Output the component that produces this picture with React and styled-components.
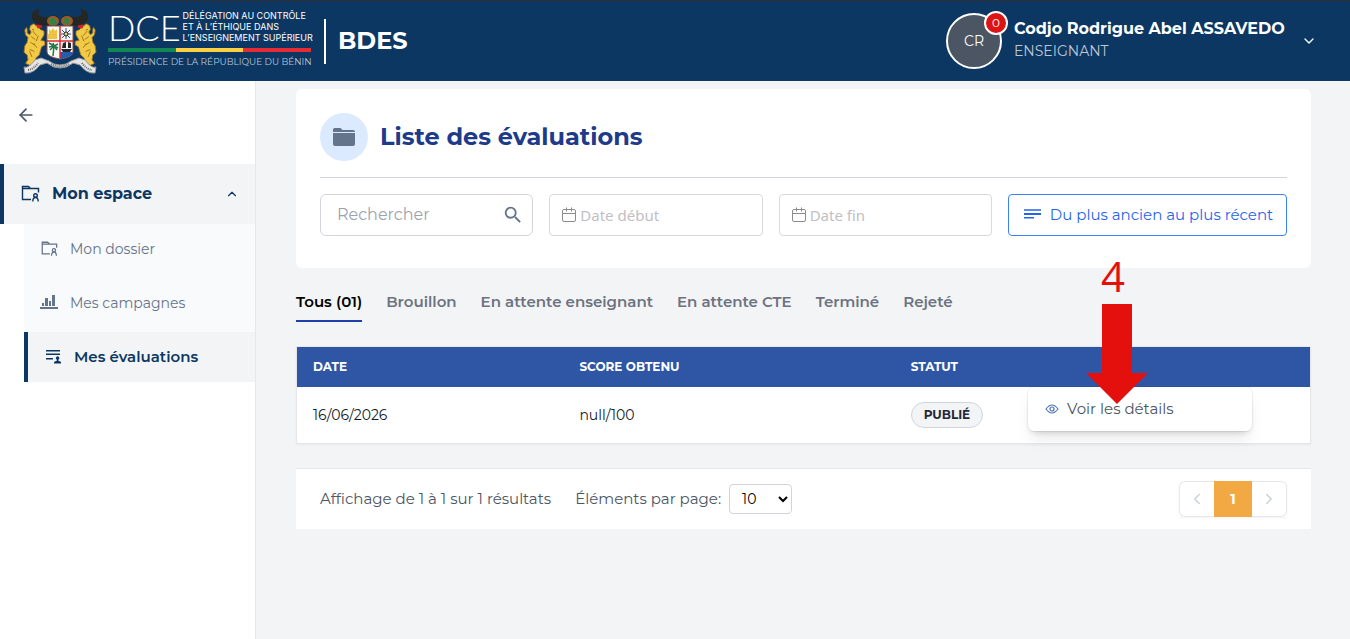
import { useState } from "react";
import styled, { createGlobalStyle } from "styled-components";
import { MdSearch } from "react-icons/md";
import { FiArrowLeft, FiChevronDown, FiChevronLeft, FiChevronRight, FiChevronUp } from "react-icons/fi";

const GlobalStyle = createGlobalStyle`
  * {
    box-sizing: border-box;
  }
  body {
    margin: 0;
    background: #f3f4f6;
    color: #111827;
    font-family: Montserrat, Inter, sans-serif;
    font-size: 14px;
    line-height: 20px;
  }
  button, input, select {
    font: inherit;
  }
  a {
    color: inherit;
    text-decoration: none;
  }
`;

const Page = styled.div`
  display: flex;
  flex-direction: column;
  min-height: 100vh;
`;

const Header = styled.header`
  display: flex;
  align-items: center;
  justify-content: space-between;
  height: 81px;
  padding: 0 33px 0 20px;
  border-top: 1px solid #2e3033;
  background: #0c3762;
  color: #fff;
`;

const Brand = styled.div`
  display: flex;
  align-items: center;
`;

const LogoText = styled.div`
  width: 203px;
  margin-left: 8px;
  padding-bottom: 4px;
  white-space: nowrap;
`;

const LogoTop = styled.div`
  display: flex;
  align-items: center;
  gap: 2px;
  height: 33px;
`;

const LogoName = styled.span`
  font-family: Lato, sans-serif;
  font-size: 36px;
  font-weight: 300;
  line-height: 36px;
`;

const LogoLines = styled.span`
  font-family: Inter, sans-serif;
  font-size: 9px;
  font-weight: 400;
  line-height: 11px;
`;

const FlagBar = styled.div`
  display: flex;
  height: 4px;
  margin: 5px 0 4px;
`;

const FlagBand = styled.span`
  flex: 1;
  background: ${({ color }) => color};
`;

const LogoBottom = styled.div`
  color: #b9c8d8;
  font-size: 9px;
  line-height: 12px;
`;

const AppName = styled.h1`
  margin: 0 0 0 13px;
  padding: 0 0 2px 12px;
  border-left: 2px solid #fff;
  font-size: 24px;
  line-height: 43px;
`;

const Account = styled.button`
  display: flex;
  align-items: center;
  gap: 12px;
  padding: 0;
  border: 0;
  background: none;
  color: #fff;
  text-align: left;
  cursor: pointer;
`;

const Avatar = styled.span`
  position: relative;
  display: flex;
  align-items: center;
  justify-content: center;
  width: 56px;
  height: 56px;
  border: 2px solid #fff;
  border-radius: 50%;
  background: #4b5563;
`;

const Badge = styled.span`
  position: absolute;
  top: -4px;
  right: -8px;
  width: 24px;
  height: 24px;
  border: 2px solid #fff;
  border-radius: 50%;
  background: #dc1414;
  font-size: 12px;
  text-align: center;
`;

const UserText = styled.span`
  min-width: 275px;
  padding-bottom: 4px;
`;

const UserName = styled.span`
  display: block;
  font-size: 16px;
  font-weight: 700;
  line-height: 24px;
`;

const UserRole = styled.span`
  display: block;
  color: #bcc6d2;
`;

const Body = styled.div`
  display: flex;
  flex: 1;
`;

const Sidebar = styled.aside`
  flex: 0 0 256px;
  border-right: 1px solid #e5e7eb;
  background: #fff;
`;

const BackButton = styled.button`
  display: flex;
  align-items: center;
  height: 36px;
  margin: 16px 0 31px 16px;
  padding: 0;
  border: 0;
  background: none;
  color: #4b5563;
`;

const MenuTitle = styled.button`
  display: flex;
  align-items: center;
  gap: 12px;
  width: 100%;
  height: 60px;
  padding: 0 16px;
  border: 0;
  border-left: 4px solid #0c3762;
  background: #f3f4f6;
  color: #0c3762;
  font-size: 16px;
  font-weight: 700;
  text-align: left;

  span {
    flex: 1;
  }
`;

const SubMenu = styled.nav`
  display: flex;
  flex-direction: column;
  gap: 4px;
  margin-left: 24px;
  background: #f9fafb;
`;

const MenuLink = styled.a`
  display: flex;
  align-items: center;
  gap: 12px;
  height: 50px;
  padding: 0 16px;
  border-left: ${({ $active }) => ($active ? "4px solid #0c3762" : "0")};
  background: ${({ $active }) => ($active ? "#f3f4f6" : "transparent")};
  color: ${({ $active }) => ($active ? "#0c3762" : "#64748b")};
  font-size: ${({ $active }) => ($active ? 15 : 14)}px;
  font-weight: ${({ $active }) => ($active ? 600 : 400)};
`;

const Main = styled.main`
  flex: 1;
  min-width: 0;
  padding: 8px 39px 40px 40px;
`;

const Card = styled.section`
  padding: 24px 24px 32px;
  border-radius: 6px;
  background: #fff;
`;

const CardHead = styled.div`
  display: flex;
  align-items: center;
  gap: 12px;
  padding-bottom: 16px;
  border-bottom: 1px solid #d1d5db;
`;

const RoundIcon = styled.span`
  display: flex;
  align-items: center;
  justify-content: center;
  width: 48px;
  height: 48px;
  border-radius: 50%;
  background: #dbeafe;
`;

const CardTitle = styled.h2`
  margin: 0;
  color: #1e3a8a;
  font-size: 24px;
  font-weight: 700;
  line-height: 32px;
`;

const Filters = styled.form`
  display: grid;
  grid-template-columns: repeat(3, minmax(0, 1fr)) 279px;
  gap: 16px;
  padding-top: 16px;
`;

const Field = styled.label`
  display: flex;
  align-items: center;
  gap: 4px;
  height: 42px;
  padding: ${({ $search }) => ($search ? "0 8px 0 16px" : "0 12px")};
  border: 1px solid ${({ $search }) => ($search ? "#d1d5db" : "#d9d9d9")};
  border-radius: ${({ $search }) => ($search ? 6 : 4)}px;
  color: #64748b;

  input {
    flex: 1;
    min-width: 0;
    padding: 0;
    border: 0;
    outline: 0;
    background: none;
    font-family: ${({ $search }) => ($search ? "inherit" : '"Noto Sans", sans-serif')};
    font-size: ${({ $search }) => ($search ? 16 : 15)}px;
  }
  input::placeholder {
    color: ${({ $search }) => ($search ? "#9ca3af" : "#bfbfc4")};
  }
`;

const SortButton = styled.button`
  display: flex;
  align-items: center;
  justify-content: center;
  gap: 8px;
  height: 42px;
  padding: 0;
  border: 1px solid #3b82f6;
  border-radius: 4px;
  background: #fff;
  color: #2563eb;
  font-size: 15px;
  white-space: nowrap;
`;

const Tabs = styled.div`
  display: flex;
  gap: 24px;
  padding: 16px 0 24px;
`;

const Tab = styled.button`
  height: 38px;
  padding: 0;
  border: 0;
  border-bottom: 2px solid ${({ $active }) => ($active ? "#1e40af" : "transparent")};
  background: none;
  color: ${({ $active }) => ($active ? "#000" : "#6b7280")};
  font-size: 15px;
  font-weight: 600;
  white-space: nowrap;
`;

const TableWrap = styled.div`
  position: relative;
  border: 1px solid #e5e7eb;
  background: #fff;
  box-shadow: 0 1px 2px rgba(0, 0, 0, 0.05);
`;

const Table = styled.table`
  width: 100%;
  border-collapse: collapse;
  table-layout: fixed;
  text-align: left;

  th {
    height: 40px;
    padding: 0 16px;
    background: #2f55a5;
    color: #fff;
    font-size: 12px;
    font-weight: 700;
  }
  td {
    height: 56px;
    padding: 0 16px;
  }
  th:nth-child(1) {
    width: 26.3%;
  }
  th:nth-child(2) {
    width: 32.7%;
  }
  th:nth-child(3) {
    width: 12%;
  }
`;

const Status = styled.span`
  display: inline-block;
  padding: 2px 12px;
  border: 1px solid #d1d5db;
  border-radius: 13px;
  background: #f3f4f6;
  color: #1f2937;
  font-size: 12px;
  font-weight: 700;
`;

const ActionCell = styled.td`
  position: relative;
`;

const ActionMenu = styled.div`
  position: absolute;
  top: 0;
  right: 58px;
  width: 224px;
  padding: 4px 0;
  border-radius: 6px;
  background: #fff;
  box-shadow: 0 0 0 1px rgba(0, 0, 0, 0.05), 0 10px 15px -3px rgba(0, 0, 0, 0.1), 0 4px 6px -4px rgba(0, 0, 0, 0.2);
`;

const ActionItem = styled.button`
  display: flex;
  align-items: center;
  gap: 8px;
  width: 100%;
  height: 36px;
  padding: 0 17px;
  border: 0;
  background: none;
  color: #4b5563;
  font-size: 15px;
`;

const Pointer = styled.div`
  position: absolute;
  top: -96px;
  right: 162px;
  display: flex;
  flex-direction: column;
  align-items: center;
  gap: 3px;
  width: 62px;
  color: #e3100e;
  font-family: "Open Sans", sans-serif;
  font-size: 42px;
  line-height: 50px;
  pointer-events: none;

  span {
    padding-right: 8px;
  }
`;

const Footer = styled.footer`
  display: flex;
  align-items: center;
  justify-content: space-between;
  margin-top: 24px;
  padding: 12px 24px;
  border-top: 1px solid #e5e7eb;
  background: #fff;
  color: #4b5563;
`;

const FooterInfo = styled.div`
  display: flex;
  align-items: center;
  gap: 24px;
  font-size: 15px;
`;

const PageSize = styled.label`
  display: flex;
  align-items: center;
  gap: 8px;

  select {
    width: 63px;
    height: 30px;
    padding: 0 0 0 8px;
    border: 1px solid #d1d5db;
    border-radius: 4px;
    background: #fff;
    color: #000;
    font-size: 14px;
  }
`;

const Pager = styled.div`
  display: flex;
  box-shadow: 0 1px 2px rgba(0, 0, 0, 0.05);
`;

const PageButton = styled.button`
  display: flex;
  align-items: center;
  justify-content: center;
  width: ${({ $current }) => ($current ? 38 : 35)}px;
  height: 36px;
  padding: 0;
  border: ${({ $current }) => ($current ? "0" : "1px solid #e5e7eb")};
  background: ${({ $current }) => ($current ? "#f2a944" : "#fff")};
  color: ${({ $current }) => ($current ? "#fff" : "#cbd0d8")};
  font-weight: 700;

  &:first-child {
    border-right: 0;
    border-radius: 6px 0 0 6px;
  }
  &:last-child {
    border-left: 0;
    border-radius: 0 6px 6px 0;
  }
`;

const Lion = () => (
  <g transform="translate(4 3) scale(.8 .92)">
    <path
      d="M15 17l-3-2-4 2-1 4 2 3-2 3-3-2v-4l-1-2-2 3 1 5 3 3-1 5-3 4-1 7 4 3 1 5-3 4 5 2 6-3 2-5 4-3 3-9 4-2v-4l-5-1 4-6v-4l-5-2-3-4z"
      fill="#f0ca45"
      stroke="#a77722"
    />
    <path d="M10 21l3 1m-4 7l5 3m-6 3l5 3m-6 5l6 2m-2-22l5 5m-4 8l4 5m-9 4l3 6M18 28l-3 6" stroke="#9a691b" fill="none" />
    <path d="M15 16l7-1 1 4-6 1z" fill="#d42025" />
  </g>
);

const CoatOfArms = () => (
  <svg width="80" height="68" viewBox="0 0 80 68" role="img" aria-label="Armoiries du Bénin">
    <Lion />
    <g transform="matrix(-1 0 0 1 80 0)">
      <Lion />
    </g>
    <path
      d="M31 18c-10 2-18-1-19-7-1-5 2-9 8-9-3 4-2 8 4 8 5 1 9-3 13-1l2 7zM49 18c10 2 18-1 19-7 1-5-2-9-8-9 3 4 2 8-4 8-5 1-9-3-13-1l-2 7z"
      fill="#252724"
    />
    <ellipse cx="33" cy="14" rx="6" ry="5" fill="#9b5b2a" />
    <ellipse cx="47" cy="14" rx="6" ry="5" fill="#9b5b2a" />
    <path d="M30 11l5 1 2 4-4 3-3-3zM45 10l5 3-2 5-4-2z" fill="#318345" />
    <path d="M27 19h26v26q0 5-13 7-13-2-13-7z" fill="#f7f7f1" stroke="#8c4f45" />
    <path d="M40 45h13q0 5-13 7z" fill="#275bab" />
    <path d="M29 27v-5l2 2 2-3 2 3 2-2v10h-9v-5z" fill="#edc33b" />
    <path d="M46 21v11m-5-5h10m-9-4l8 8m0-8l-8 8" stroke="#2355a0" />
    <circle cx="46" cy="27" r="2" fill="#f2d057" stroke="#202a42" />
    <path d="M34 39l-1 10m1-10l-5-3m5 3l-5 1m5-1l-4 4m4-4l4-2m-4 2l4 2m-4-2l3 4m-3-4l-1-3" stroke="#25794b" strokeWidth="1.5" fill="none" />
    <path d="M41 42h11l-2 3h-7zM43 36l3-1v6h-4zm5-1l3 1v5h-3z" fill="#22252c" />
    <path d="M27 34h26M40 19v32" stroke="#e32631" strokeWidth="1.5" />
    <path
      d="M15 53q-7 9-11 7l1 6q8 1 15-8l7-2q6 5 13 5t13-5l7 2q7 9 15 8l1-6q-4 2-11-7l-6-2-8 3q-5 4-11 4t-11-4l-8-3z"
      fill="#e4e5e4"
      stroke="#999"
    />
    <path d="M8 63q6-1 10-7M31 57q9 5 18 0m13-1q4 6 10 7" fill="none" stroke="#666" strokeWidth="2" strokeDasharray="1 1" />
  </svg>
);

const FolderUserIcon = ({ size = 20 }) => (
  <svg width={size} height={size} viewBox="0 0 20 20" fill="none" stroke="currentColor" strokeWidth="1.4">
    <path d="M11 15.500H2.500V2.500h6l2 2h8V8.500M2.500 4.500h8" />
    <circle cx="15.500" cy="11.500" r="1.800" />
    <path d="M12.800 17.500q0-4 2.700-4t2.700 4" />
  </svg>
);

const ChartIcon = () => (
  <svg width="18" height="18" viewBox="0 0 18 18" fill="currentColor">
    <path d="M0 13h18v2H0zM2 9h2v3H2zM5 4h3v8H5zM9 7h2v5H9zM12 1h3v11h-3z" />
  </svg>
);

const ListUserIcon = () => (
  <svg width="18" height="18" viewBox="0 0 18 18" fill="currentColor">
    <path d="M2 2h14v1.600H2zM2 5.400h14V7H2zM2 10h7v1.600H2zM10 15.500v-1.300q0-1 2.800-1.500v-1a1.700 1.700 0 1 1 1.600 0v1q2.600.5 2.600 1.500v1.300z" />
  </svg>
);

const FolderIcon = () => (
  <svg width="24" height="24" viewBox="0 0 24 24" fill="#64748b">
    <path d="M1 6V4.500Q1 3 2.500 3h6l2 2H21q2 0 2 1.500v.5H1z" />
    <path d="M1 8h22v11q0 2-2 2H3q-2 0-2-2z" />
  </svg>
);

const CalendarIcon = () => (
  <svg width="14" height="16" viewBox="0 0 14 16" fill="none" stroke="#8c8c8c">
    <rect x=".5" y="2.500" width="13" height="12" rx="1.500" />
    <path d="M.5 6.500h13M4.500.5v4M9.500.5v4" />
  </svg>
);

const SortIcon = () => (
  <svg width="20" height="18" viewBox="0 0 20 18" fill="currentColor">
    <path d="M2 3h17v2H2z" opacity=".75" />
    <path d="M2 7h17v2H2zM2 11h10v1.500H2z" />
  </svg>
);

const EyeIcon = () => (
  <svg width="14" height="14" viewBox="0 0 14 14" fill="none" stroke="#4b72b5" strokeWidth="1.2">
    <path d="M1 7q6-8 12 0-6 8-12 0z" />
    <circle cx="7" cy="7" r="2" />
  </svg>
);

const BigArrow = () => (
  <svg width="62" height="100" viewBox="0 0 62 100" fill="currentColor">
    <path d="M16 0h30v69h16L31 100 0 69h16z" />
  </svg>
);

const tabs = ["Tous (01)", "Brouillon", "En attente enseignant", "En attente CTE", "Terminé", "Rejeté"];

const menu = [
  { id: 1, name: "Mon dossier", icon: <FolderUserIcon size={18} /> },
  { id: 2, name: "Mes campagnes", icon: <ChartIcon /> },
  { id: 3, name: "Mes évaluations", icon: <ListUserIcon />, active: true },
];

const evaluations = [{ id: 1, date: "16/06/2026", score: "null/100", status: "PUBLIÉ" }];

const App = () => {
  const [activeTab, setActiveTab] = useState(tabs[0]);
  const [search, setSearch] = useState("");

  return (
    <Page>
      <GlobalStyle />
      <Header>
        <Brand>
          <CoatOfArms />
          <LogoText>
            <LogoTop>
              <LogoName>DCE</LogoName>
              <LogoLines>
                DÉLÉGATION AU CONTRÔLE
                <br />
                ET À L’ÉTHIQUE DANS
                <br />
                L’ENSEIGNEMENT SUPÉRIEUR
              </LogoLines>
            </LogoTop>
            <FlagBar>
              <FlagBand color="#128655" />
              <FlagBand color="#fbd044" />
              <FlagBand color="#e52b36" />
            </FlagBar>
            <LogoBottom>PRÉSIDENCE DE LA RÉPUBLIQUE DU BÉNIN</LogoBottom>
          </LogoText>
          <AppName>BDES</AppName>
        </Brand>
        <Account type="button">
          <Avatar>
            CR
            <Badge>0</Badge>
          </Avatar>
          <UserText>
            <UserName>Codjo Rodrigue Abel ASSAVEDO</UserName>
            <UserRole>ENSEIGNANT</UserRole>
          </UserText>
          <FiChevronDown size={16} />
        </Account>
      </Header>

      <Body>
        <Sidebar>
          <BackButton type="button" aria-label="Retour">
            <FiArrowLeft size={20} />
          </BackButton>
          <MenuTitle type="button">
            <FolderUserIcon />
            <span>Mon espace</span>
            <FiChevronUp size={14} />
          </MenuTitle>
          <SubMenu>
            {menu.map((item) => (
              <MenuLink key={item.id} href="#" $active={item.active}>
                {item.icon}
                {item.name}
              </MenuLink>
            ))}
          </SubMenu>
        </Sidebar>

        <Main>
          <Card>
            <CardHead>
              <RoundIcon>
                <FolderIcon />
              </RoundIcon>
              <CardTitle>Liste des évaluations</CardTitle>
            </CardHead>
            <Filters>
              <Field $search>
                <input
                  type="text"
                  aria-label="Rechercher"
                  placeholder="Rechercher"
                  value={search}
                  onChange={(e) => setSearch(e.target.value)}
                />
                <MdSearch size={22} />
              </Field>
              <Field>
                <CalendarIcon />
                <input type="text" aria-label="Date début" placeholder="Date début" />
              </Field>
              <Field>
                <CalendarIcon />
                <input type="text" aria-label="Date fin" placeholder="Date fin" />
              </Field>
              <SortButton type="button">
                <SortIcon />
                Du plus ancien au plus récent
              </SortButton>
            </Filters>
          </Card>

          <Tabs>
            {tabs.map((tab) => (
              <Tab key={tab} type="button" $active={tab === activeTab} onClick={() => setActiveTab(tab)}>
                {tab}
              </Tab>
            ))}
          </Tabs>

          <TableWrap>
            <Table>
              <thead>
                <tr>
                  <th>DATE</th>
                  <th>SCORE OBTENU</th>
                  <th>STATUT</th>
                  <th aria-label="Actions"></th>
                </tr>
              </thead>
              <tbody>
                {evaluations.map((item) => (
                  <tr key={item.id}>
                    <td>{item.date}</td>
                    <td>{item.score}</td>
                    <td>
                      <Status>{item.status}</Status>
                    </td>
                    <ActionCell>
                      <ActionMenu>
                        <ActionItem type="button">
                          <EyeIcon />
                          Voir les détails
                        </ActionItem>
                      </ActionMenu>
                    </ActionCell>
                  </tr>
                ))}
              </tbody>
            </Table>
            <Pointer>
              <span>4</span>
              <BigArrow />
            </Pointer>
          </TableWrap>

          <Footer>
            <FooterInfo>
              <span>Affichage de 1 à 1 sur 1 résultats</span>
              <PageSize>
                Éléments par page:
                <select defaultValue="10">
                  <option>10</option>
                  <option>25</option>
                  <option>50</option>
                </select>
              </PageSize>
            </FooterInfo>
            <Pager>
              <PageButton type="button" aria-label="Page précédente">
                <FiChevronLeft size={18} />
              </PageButton>
              <PageButton type="button" $current>
                1
              </PageButton>
              <PageButton type="button" aria-label="Page suivante">
                <FiChevronRight size={18} />
              </PageButton>
            </Pager>
          </Footer>
        </Main>
      </Body>
    </Page>
  );
};

export default App;
